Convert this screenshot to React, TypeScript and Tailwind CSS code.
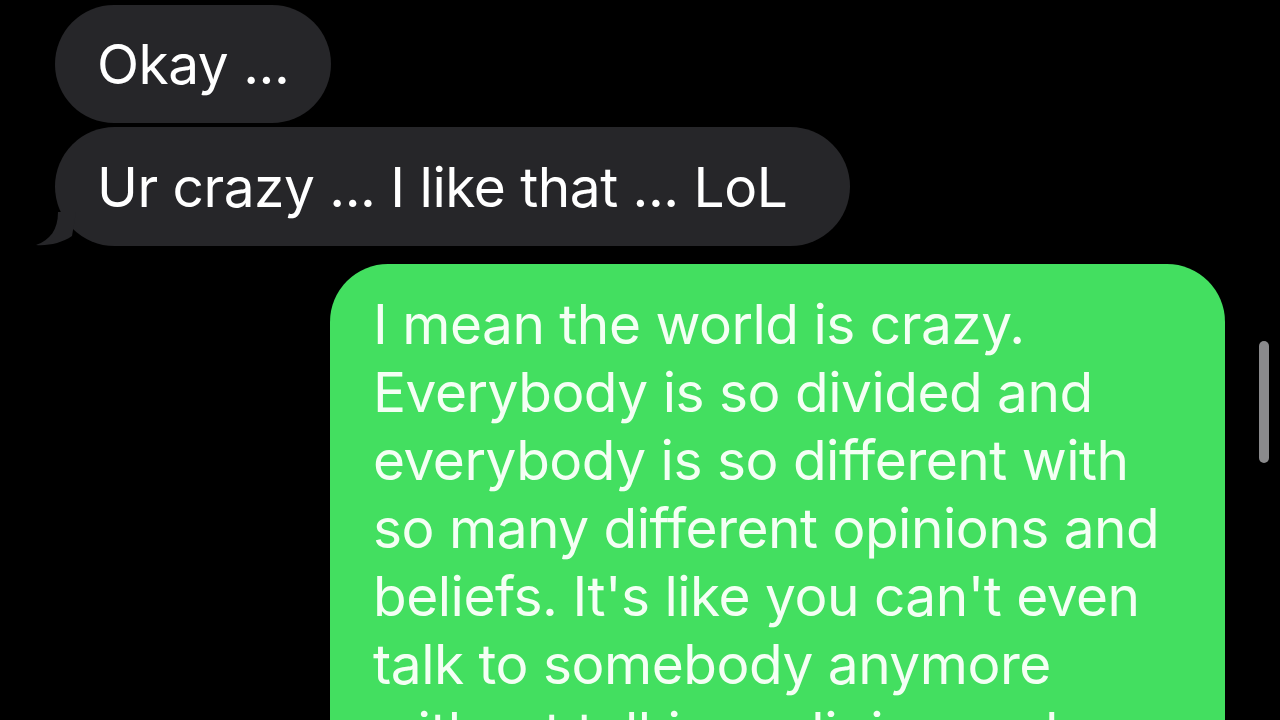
import React from 'react';

const font = { fontFamily: 'Inter, "Noto Sans", sans-serif' };

const sentLines = [
  'I mean the world is crazy.',
  'Everybody is so divided and',
  'everybody is so different with',
  'so many different opinions and',
  "beliefs. It's like you can't even",
  'talk to somebody anymore',
  'without talking religion and',
];

function Tail() {
  return (
    <svg
      className="absolute -left-[19px] bottom-0"
      width="40"
      height="34"
      viewBox="0 0 40 34"
    >
      <path d="M22 0 C22 18 14 28 0 33 C12 34 26 31 36 24 L40 0 Z" fill="#262629" />
    </svg>
  );
}

export default function App() {
  return (
    <div
      className="w-[1280px] h-[720px] bg-black overflow-hidden relative text-white"
      style={font}
    >
      <div className="flex flex-col pt-[5px] px-[55px]">
        {/* Received */}
        <div className="self-start bg-[#262629] rounded-[60px] h-[118px] pl-[42px] pr-[42px] flex items-center">
          <span className="text-[55px] leading-[68px] tracking-[-0.5px]">Okay ...</span>
        </div>
        <div className="relative self-start mt-[4px] bg-[#262629] rounded-[60px] h-[119px] pl-[42px] pr-[63px] flex items-center">
          <Tail />
          <span className="relative text-[55px] leading-[68px] tracking-[-0.5px]">
            Ur crazy ... I like that ... LoL
          </span>
        </div>

        {/* Sent */}
        <div className="self-end mt-[18px] w-[895px] bg-[#43DF60] rounded-t-[58px] pl-[43px] pt-[26px] pb-[40px]">
          {sentLines.map((l) => (
            <div
              key={l}
              className="whitespace-nowrap text-[55px] leading-[68px] tracking-[-0.5px] text-[#f4fff4]"
            >
              {l}
            </div>
          ))}
        </div>
      </div>

      {/* scroll indicator */}
      <div className="absolute left-[1259px] top-[341px] w-[10px] h-[122px] rounded-full bg-[#8a8a8c]" />
    </div>
  );
}
